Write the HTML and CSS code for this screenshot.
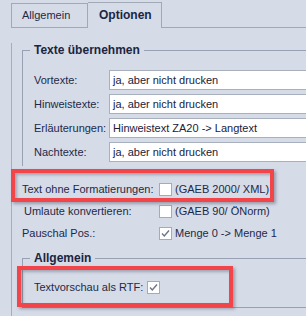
FILE: index.html
```html
<!DOCTYPE html>
<html lang="de">
<head>
    <meta charset="UTF-8">
    <title>Optionen</title>
    <link rel="stylesheet" href="styles.css">
</head>
<body>
    <!-- Tab strip -->
    <div class="tabs">
        <div class="tab">Allgemein</div>
        <div class="tab active">Optionen</div>
        <div class="tab-fill"></div>
    </div>

    <div class="panel">
        <fieldset class="group texts">
            <legend>Texte übernehmen</legend>
            <div class="form-grid">
                <label>Vortexte:</label>
                <div class="field">ja, aber nicht drucken</div>
                <label>Hinweistexte:</label>
                <div class="field">ja, aber nicht drucken</div>
                <label>Erläuterungen:</label>
                <div class="field">Hinweistext ZA20 -&gt; Langtext</div>
                <label>Nachtexte:</label>
                <div class="field">ja, aber nicht drucken</div>
            </div>
        </fieldset>

        <div class="options">
            <div class="check-row">
                <span class="label">Text ohne Formatierungen:</span>
                <span class="box"></span>
                <span class="hint">(GAEB 2000/ XML)</span>
            </div>
            <div class="check-row">
                <span class="label umlaute">Umlaute konvertieren:</span>
                <span class="box"></span>
                <span class="hint">(GAEB 90/ ÖNorm)</span>
            </div>
            <div class="check-row">
                <span class="label">Pauschal Pos.:</span>
                <span class="box checked"><svg width="11" height="11" viewBox="0 0 11 11"><path d="M2 5.5 L4.3 8 L9 2.5" fill="none" stroke="#6d7689" stroke-width="1.4"/></svg></span>
                <span class="hint">Menge 0 -&gt; Menge 1</span>
            </div>
        </div>

        <fieldset class="group general">
            <legend>Allgemein</legend>
            <div class="check-row preview">
                <span class="label">Textvorschau als RTF:</span>
                <span class="box checked"><svg width="11" height="11" viewBox="0 0 11 11"><path d="M2 5.5 L4.3 8 L9 2.5" fill="none" stroke="#6d7689" stroke-width="1.4"/></svg></span>
            </div>
        </fieldset>
    </div>

    <!-- red annotation frames -->
    <div class="mark mark-top"></div>
    <div class="mark mark-bottom"></div>
</body>
</html>
```

FILE: styles.css
```css
body {
    margin: 0;
    width: 306px;
    height: 316px;
    overflow: hidden;
    position: relative;
    background-color: #d6dbe8;
    font-family: 'Liberation Sans', Arial, sans-serif;
    font-size: 11px;
    color: #1d2946;
}

/* tabs */
.tabs {
    display: flex;
    padding: 2px 0 0 11px;
    height: 26px;
}

.tab {
    box-sizing: border-box;
    width: 77px;
    height: 25px;
    margin-top: 1px;
    padding-left: 10px;
    border: 1px solid #a2a9b6;
    line-height: 22px;
}

.tab.active {
    width: 74px;
    height: 26px;
    margin-top: 0;
    padding-left: 11px;
    border-left: none;
    border-bottom: none;
    font-weight: bold;
    font-size: 12px;
    line-height: 24px;
    color: #1b2643;
}

.tab-fill {
    flex: 1;
    border-bottom: 1px solid #a2a9b6;
}

.panel {
    height: 288px;
    margin-left: 11px;
    border-left: 1px solid #a7aebb;
}

/* group boxes */
.group {
    margin: 0 0 0 10px;
    padding: 0;
    min-width: 0;
    border: none;
    border-left: 1px solid #98a1b3;
    border-top: 1px solid #98a1b3;
}

.group legend {
    margin-left: -4px;
    padding: 0 4px;
    font-size: 12px;
    font-weight: bold;
    line-height: 14px;
    color: #1b2540;
}

.texts {
    margin-top: 15px;
    padding: 13px 0 4px 11px;
}

.form-grid {
    display: grid;
    grid-template-columns: 75px 1fr;
    grid-auto-rows: 20px;
    row-gap: 4px;
    align-items: center;
}

.field {
    box-sizing: border-box;
    height: 20px;
    padding-left: 3px;
    background-color: #fff;
    border: 1px solid #a8b0be;
    border-right: none;
    line-height: 18px;
    color: #1a2238;
    white-space: nowrap;
}

/* checkbox rows */
.options {
    padding: 12px 0 0 10px;
}

.check-row {
    display: flex;
    align-items: center;
    height: 22px;
}

.check-row .label {
    width: 137px;
}

.label.umlaute {
    padding-left: 2px;
    width: 135px;
}

.box {
    box-sizing: border-box;
    width: 13px;
    height: 13px;
    background-color: #fff;
    border: 1px solid #a3abba;
    display: flex;
    align-items: center;
    justify-content: center;
}

.hint {
    margin-left: 3px;
}

.general {
    margin-top: 7px;
    padding: 11px 0 9px 11px;
    border-bottom: 1px solid #98a1b3;
}

.preview .label {
    width: 113px;
}

/* annotation frames drawn over the dialog */
.mark {
    position: absolute;
    box-sizing: border-box;
    border: 4px solid #f24549;
    box-shadow: 2px 2px 3px rgba(40, 40, 60, 0.35), inset 2px 2px 3px rgba(40, 40, 60, 0.3);
}

.mark-top {
    left: 11px;
    top: 169px;
    width: 263px;
    height: 33px;
}

.mark-bottom {
    left: 17px;
    top: 266px;
    width: 216px;
    height: 41px;
}
```
